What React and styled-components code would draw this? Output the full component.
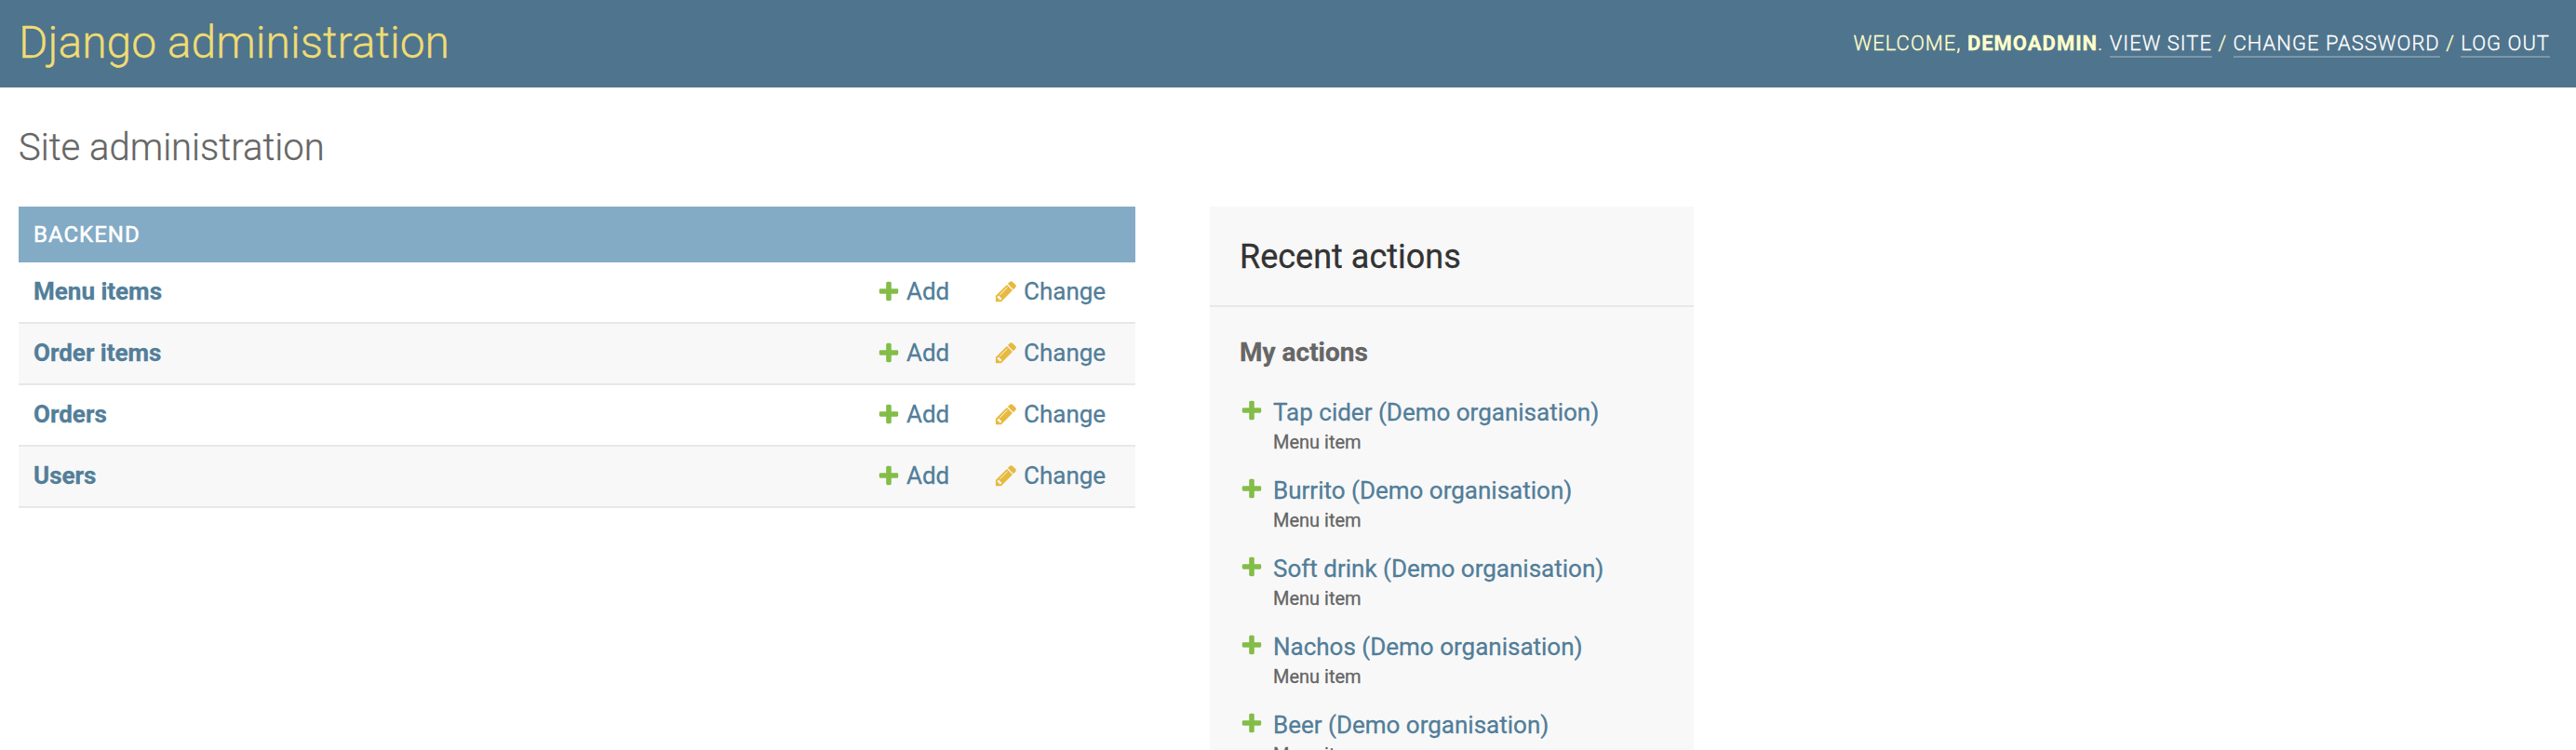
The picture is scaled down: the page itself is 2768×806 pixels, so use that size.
import React from "react";
import styled, { createGlobalStyle } from "styled-components";

const GlobalStyle = createGlobalStyle`
  html, body { margin: 0; padding: 0; }
  body {
    height: 806px;
    overflow: hidden;
    background: #fff;
    color: #333;
    font-family: Roboto, "Liberation Sans", sans-serif;
    font-size: 26px;
    -webkit-text-stroke: 0.3px;
  }
  * { box-sizing: border-box; }
`;

const Page = styled.div`
  height: 806px;
  overflow: hidden;
`;

const Header = styled.header`
  display: flex;
  align-items: center;
  justify-content: space-between;
  height: 94px;
  padding: 0 28px 0 20px;
  background: #4f748d;
  color: #ffffcc;
`;

const Branding = styled.h1`
  margin: 0 0 3px;
  font-size: 48px;
  font-weight: 300;
  line-height: 57px;
  color: #efdc73;
`;

const UserTools = styled.div`
  margin-bottom: 1px;
  font-size: 22px;
  font-weight: 300;
  line-height: 25px;
  letter-spacing: 1px;
  text-transform: uppercase;
  white-space: pre;

  strong { font-weight: 700; }
`;

const ToolLink = styled.a`
  padding-bottom: 1px;
  color: #fff;
  border-bottom: 2px solid rgba(255, 255, 255, 0.25);
`;

const Content = styled.main`
  padding: 39px 20px 0;
`;

const Title = styled.h2`
  margin: 0 0 38px;
  font-size: 40px;
  font-weight: 300;
  line-height: 51px;
  color: #666;
`;

const Columns = styled.div`
  display: flex;
  align-items: flex-start;
  gap: 80px;
`;

const Module = styled.section`
  width: 1200px;
`;

const ModuleCaption = styled.div`
  height: 60px;
  padding: 0 16px;
  background: #84abc5;
  color: #fff;
  font-size: 24px;
  line-height: 60px;
  letter-spacing: 1px;
  text-transform: uppercase;
  -webkit-text-stroke: 0.5px;
`;

const Row = styled.div`
  display: grid;
  grid-template-columns: 1fr 126px 136px;
  height: 66px;
  padding: 0 16px;
  border-bottom: 2px solid #e8e8e8;
  background: ${({ $shaded }) => ($shaded ? "#f8f8f8" : "#fff")};
  line-height: 62px;
`;

const ModelLink = styled.a`
  color: #527e99;
  font-weight: 700;
`;

const ActionLink = styled.a`
  display: flex;
  align-items: center;
  gap: 6px;
  height: 62px;
  color: #527e99;
`;

const Icon = styled.svg`
  display: block;
  flex: none;
  width: 26px;
  height: 26px;
  fill: ${({ $color }) => $color};
`;

const Sidebar = styled.aside`
  width: 520px;
  background: #f8f8f8;
`;

const SidebarTitle = styled.h2`
  height: 108px;
  margin: 0;
  padding: 32px;
  border-bottom: 2px solid #e8e8e8;
  font-size: 36px;
  font-weight: 400;
  line-height: 44px;
  color: #333;
`;

const SidebarSubtitle = styled.h3`
  margin: 32px 32px 24px;
  font-size: 28px;
  font-weight: 700;
  line-height: 33px;
  color: #666;
`;

const ActionList = styled.ul`
  margin: 0;
  padding: 6px 32px 0;
  list-style: none;
`;

const ActionItem = styled.li`
  display: flex;
  gap: 10px;
  height: 84px;

  svg { margin-top: 3px; }
`;

const ActionText = styled.div`
  display: flex;
  flex-direction: column;
`;

const ActionName = styled.a`
  color: #527e99;
  line-height: 36px;
`;

const ActionType = styled.span`
  color: #666;
  font-size: 20px;
  line-height: 28px;
`;

const AddIcon = () => (
  <Icon viewBox="0 0 1792 1792" $color="#83bd48">
    <path d="M1600 796v192q0 40-28 68t-68 28h-416v416q0 40-28 68t-68 28h-192q-40 0-68-28t-28-68v-416h-416q-40 0-68-28t-28-68v-192q0-40 28-68t68-28h416v-416q0-40 28-68t68-28h192q40 0 68 28t28 68v416h416q40 0 68 28t28 68z" />
  </Icon>
);

const ChangeIcon = () => (
  <Icon viewBox="0 0 1792 1792" $color="#e7b93e">
    <path d="M491 1536l91-91-235-235-91 91v107h128v128h107zm523-928q0-22-22-22-10 0-17 7l-542 542q-7 7-7 17 0 22 22 22 10 0 17-7l542-542q7-7 7-17zm-54-192l416 416-832 832h-416v-416zm683 96q0 53-37 90l-166 166-416-416 165-166q38-37 91-37 53 0 91 37l235 234q37 39 37 92z" />
  </Icon>
);

const models = ["Menu items", "Order items", "Orders", "Users"];
const actions = ["Tap cider", "Burrito", "Soft drink", "Nachos", "Beer"];

export default function App() {
  return (
    <Page>
      <GlobalStyle />
      <Header>
        <Branding>Django administration</Branding>
        <UserTools>
          Welcome, <strong>demoadmin</strong>. <ToolLink>View site</ToolLink> /{" "}
          <ToolLink>Change password</ToolLink> / <ToolLink>Log out</ToolLink>
        </UserTools>
      </Header>
      <Content>
        <Title>Site administration</Title>
        <Columns>
          <Module>
            <ModuleCaption>Backend</ModuleCaption>
            {models.map((name, i) => (
              <Row key={name} $shaded={i % 2 === 1}>
                <ModelLink>{name}</ModelLink>
                <ActionLink><AddIcon />Add</ActionLink>
                <ActionLink><ChangeIcon />Change</ActionLink>
              </Row>
            ))}
          </Module>
          <Sidebar>
            <SidebarTitle>Recent actions</SidebarTitle>
            <SidebarSubtitle>My actions</SidebarSubtitle>
            <ActionList>
              {actions.map((name) => (
                <ActionItem key={name}>
                  <AddIcon />
                  <ActionText>
                    <ActionName>{name} (Demo organisation)</ActionName>
                    <ActionType>Menu item</ActionType>
                  </ActionText>
                </ActionItem>
              ))}
            </ActionList>
          </Sidebar>
        </Columns>
      </Content>
    </Page>
  );
}
